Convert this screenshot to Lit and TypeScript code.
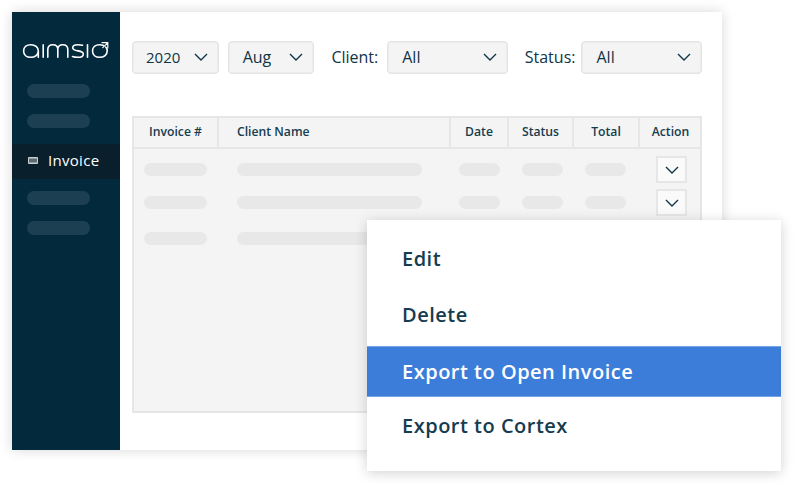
import { css, html, LitElement, svg } from "lit";
import { customElement } from "lit/decorators.js";

const chevron = html`<svg class="chev" width="14" height="8" viewBox="0 0 14 8">
  <polyline points="1,1 7,7 13,1" fill="none" stroke="#0f3547" stroke-width="1.4" />
</svg>`;

const logo = svg`
  <g fill="none" stroke="#fff" stroke-width="1.6" stroke-linecap="round">
    <path d="M38.300 51c0 3.700-3.200 6.300-7.500 6.300S23.600 54.700 23.600 51s2.900-6.300 7.200-6.300S38.300 47.300 38.300 51v6.300" />
    <path d="M43.200 44.800V57.300" />
    <path d="M47.800 57.300V49.500c0-2.900 2-4.800 5-4.800s5 1.900 5 4.800v7.800M57.800 49.500c0-2.900 2-4.800 5-4.800s5 1.900 5 4.800v7.800" />
    <path d="M82.500 45.200c-1.500-.4-3.500-.5-5-.5-3 0-4.800 1.300-4.800 3.100 0 4.600 10.600 1.600 10.600 6.100 0 2.100-2 3.400-5.300 3.400-2 0-4-.3-5.500-.8" />
    <path d="M87.500 44.800V57.300" />
    <path d="M105.700 47c1 1 1.500 2.500 1.500 4 0 3.700-3.200 6.300-7.500 6.300S92.500 54.700 92.500 51s2.900-6.300 7.200-6.300c1.400 0 2.800.3 3.800.8" />
    <path d="M102 42.600h5.800v5.400M107.800 42.600l-5 5" stroke-width="1.200" />
  </g>
`;

const rows = [{ action: true }, { action: true }, { action: false }];

@customElement("app-root")
export class AppRoot extends LitElement {
  static styles = css`
    :host {
      display: block;
      position: relative;
      width: 794px;
      height: 484px;
      overflow: hidden;
      background: #fff;
      font-family: "Open Sans", "Noto Sans", sans-serif;
      color: #0f3547;
    }

    .window {
      position: absolute;
      left: 12px;
      top: 12px;
      width: 710px;
      height: 438px;
      display: flex;
      background: #fff;
      box-shadow: 0 0 12px rgba(0, 0, 0, 0.16);
    }

    .side {
      width: 108px;
      flex: none;
      background: #03293c;
      display: flex;
      flex-direction: column;
      align-items: flex-start;
    }

    .logo {
      display: block;
      margin: 29px 0 23px 10px;
    }

    .side .pill {
      margin: 0 0 16.5px 15px;
      width: 63px;
      height: 13.5px;
      border-radius: 7px;
      background: #1c4052;
    }

    .active {
      align-self: stretch;
      box-sizing: border-box;
      height: 35px;
      margin-bottom: 12px;
      padding: 0 0 3px 16px;
      display: flex;
      align-items: center;
      gap: 10px;
      background: #0a1f2c;
      color: #fff;
      font-size: 15px;
      letter-spacing: 0.3px;
    }

    .main {
      flex: 1;
      padding: 29px 20px 0 12px;
      min-width: 0;
    }

    .toolbar {
      display: flex;
      align-items: center;
      height: 33px;
      font-size: 16px;
    }

    .select {
      box-sizing: border-box;
      height: 33px;
      display: flex;
      align-items: center;
      justify-content: space-between;
      padding: 0 10px 2px 13px;
      background: #f4f4f4;
      border: 1px solid #e4e4e4;
      box-shadow: inset 0 0 0 0.5px #e4e4e4;
      border-radius: 4px;
    }

    .small {
      width: 87px;
    }
    .wide {
      width: 121px;
      padding-left: 14px;
    }
    .gap {
      margin-left: 9px;
      padding-left: 14px;
    }
    .year {
      font-size: 15px;
    }

    .label {
      margin: 0 9px 2px 17px;
    }
    .label.status {
      margin: 0 6px 2px 17px;
    }

    .table {
      box-sizing: border-box;
      margin-top: 42px;
      width: 570px;
      height: 297px;
      background: #f4f4f4;
      border: 2px solid #e6e6e6;
    }

    .head,
    .row {
      display: grid;
      grid-template-columns: 85px 232px 58px 65px 66px 60px;
    }

    .head {
      height: 29px;
      border-bottom: 2px solid #e6e6e6;
      font-size: 12.2px;
      font-weight: 600;
      color: #163c4f;
    }

    .head div {
      display: flex;
      align-items: center;
      justify-content: center;
      padding-bottom: 2px;
      border-right: 2px solid #e6e6e6;
    }
    .head div:last-child {
      border-right: 0;
      padding-left: 1px;
    }
    .head .left {
      justify-content: flex-start;
      padding-left: 18px;
    }

    .body {
      padding-top: 7px;
    }

    .row {
      height: 27px;
      align-items: center;
      margin-bottom: 6px;
    }
    .row:nth-child(2) {
      margin-bottom: 9px;
    }

    .row .pill {
      height: 13.5px;
      border-radius: 7px;
      background: #e8e8e8;
    }
    .p1 {
      width: 63px;
      margin-left: 10px;
    }
    .p2 {
      width: 185px;
      margin-left: 18px;
    }
    .p3 {
      width: 41px;
      margin-left: 8px;
    }
    .p4 {
      width: 41px;
      margin-left: 13px;
    }
    .p5 {
      width: 41px;
      margin-left: 11px;
    }

    .act {
      box-sizing: border-box;
      width: 31px;
      height: 27px;
      margin-left: 16px;
      display: flex;
      align-items: center;
      justify-content: center;
      background: #fafafa;
      border: 2px solid #e6e6e6;
    }

    .menu {
      position: absolute;
      left: 367px;
      top: 220px;
      width: 414px;
      height: 251px;
      padding-top: 11px;
      box-sizing: border-box;
      background: #fff;
      box-shadow: 0 2px 12px rgba(0, 0, 0, 0.18);
      font-size: 20px;
      font-weight: 600;
      letter-spacing: 0.5px;
      color: #163c4f;
    }

    .item {
      height: 56px;
      display: flex;
      align-items: center;
      padding: 0 0 1px 35px;
      box-sizing: border-box;
    }

    .item.on {
      height: 51px;
      margin: 3px 0 1px;
      background: #3c7dd9;
      border: solid #76a4e6;
      border-width: 1px 0;
      color: #fff;
    }
  `;

  render() {
    return html`
      <div class="window">
        <nav class="side">
          <svg class="logo" width="87" height="20" viewBox="22 41 87 20" role="img" aria-label="aimsio">${logo}</svg>
          <div class="pill"></div>
          <div class="pill"></div>
          <div class="active">
            <svg width="10" height="7" viewBox="0 0 10 7">
              <rect width="10" height="7" rx="1" fill="#c9ced2" />
              <rect x="1" y="1.5" width="8" height="4" fill="#5b6a73" />
            </svg>
            Invoice
          </div>
          <div class="pill"></div>
          <div class="pill"></div>
        </nav>
        <main class="main">
          <div class="toolbar">
            <div class="select small"><span class="year">2020</span> ${chevron}</div>
            <div class="select small gap">Aug ${chevron}</div>
            <span class="label">Client:</span>
            <div class="select wide">All ${chevron}</div>
            <span class="label status">Status:</span>
            <div class="select wide">All ${chevron}</div>
          </div>
          <div class="table">
            <div class="head">
              <div>Invoice #</div>
              <div class="left">Client Name</div>
              <div>Date</div>
              <div>Status</div>
              <div>Total</div>
              <div>Action</div>
            </div>
            <div class="body">
              ${rows.map(
                (r) => html`<div class="row">
                  <div class="pill p1"></div>
                  <div class="pill p2"></div>
                  <div class="pill p3"></div>
                  <div class="pill p4"></div>
                  <div class="pill p5"></div>
                  ${r.action ? html`<div class="act">${chevron}</div>` : ""}
                </div>`
              )}
            </div>
          </div>
        </main>
      </div>
      <div class="menu">
        <div class="item">Edit</div>
        <div class="item">Delete</div>
        <div class="item on">Export to Open Invoice</div>
        <div class="item">Export to Cortex</div>
      </div>
    `;
  }
}
